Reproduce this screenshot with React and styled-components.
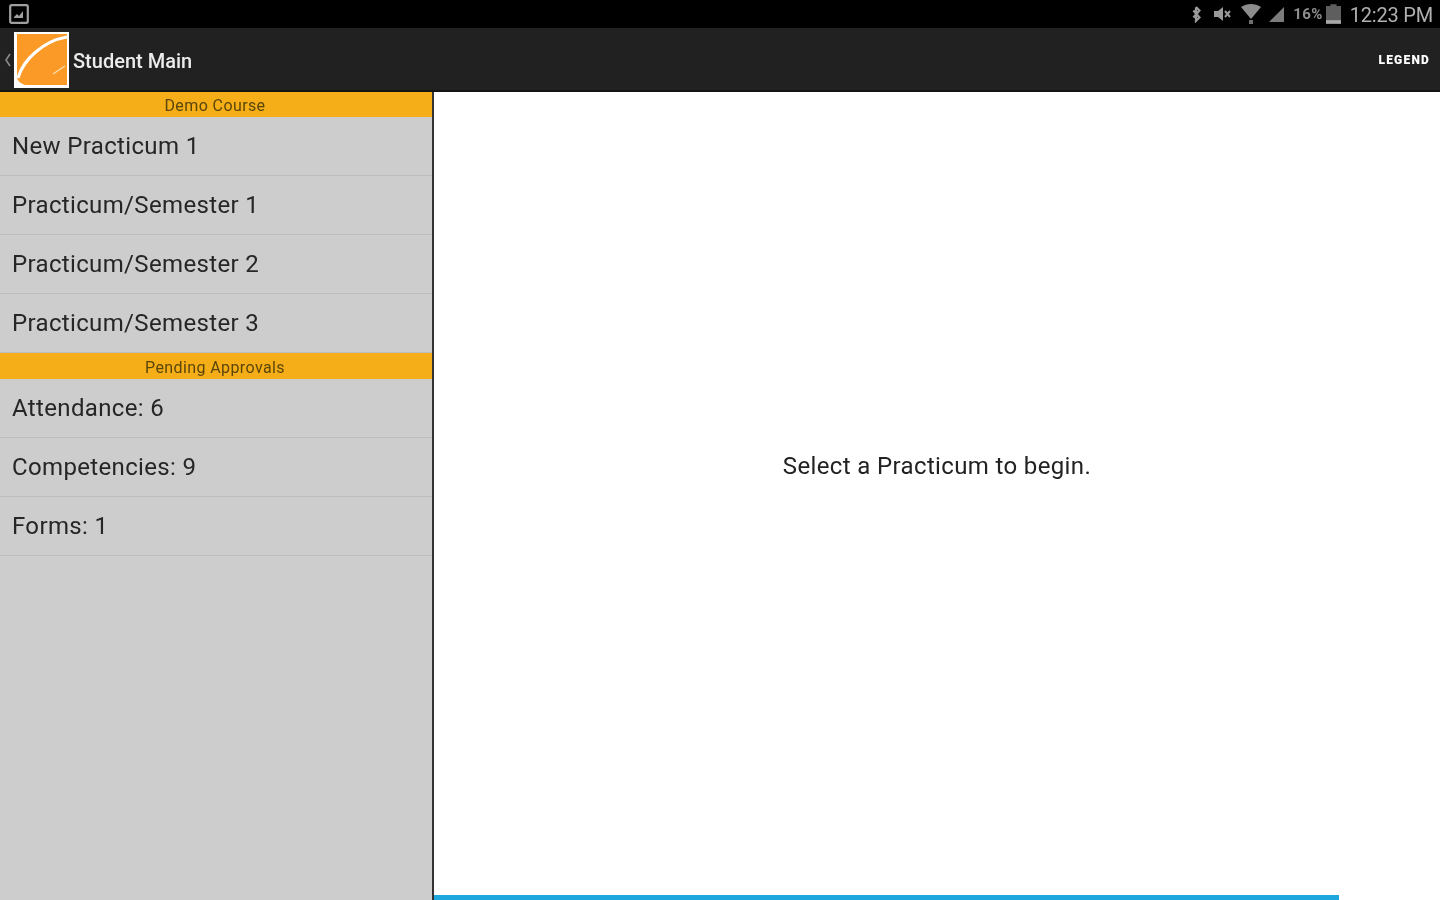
import React from "react";
import styled, { createGlobalStyle } from "styled-components";

const GlobalStyle = createGlobalStyle`
    html, body, #root {
        margin: 0;
        height: 100%;
    }
    body {
        font-family: Roboto, "Liberation Sans", sans-serif;
        overflow: hidden;
    }
`;

// the reference is an upscaled low-res capture, hence the slight softening
const Screen = styled.div`
    width: 1440px;
    height: 900px;
    display: flex;
    flex-direction: column;
    background: #fff;
    overflow: hidden;
    filter: blur(0.6px);
`;

const StatusBar = styled.div`
    height: 28px;
    flex: none;
    background: #000;
    display: flex;
    align-items: center;
    justify-content: space-between;
    padding: 0 7px 0 9px;
    color: #a8a8a8;
`;

const StatusIcons = styled.div`
    display: flex;
    align-items: center;
`;

const StatusSlot = styled.span`
    display: flex;
    align-items: center;
    margin-left: ${(p) => p.$gap || 0}px;
`;

const BatteryText = styled.span`
    font-size: 15px;
    font-weight: 700;
    letter-spacing: 0.4px;
    color: #8f8f8f;
`;

const Clock = styled.span`
    font-size: 20px;
    letter-spacing: -0.2px;
    color: #b0b0b0;
    margin: 2px 0 0 9px;
`;

const Toolbar = styled.div`
    height: 64px;
    flex: none;
    box-sizing: border-box;
    background: #212121;
    border-bottom: 2px solid #141414;
    padding: 2px 10px 0 0;
    display: flex;
    align-items: center;
    justify-content: space-between;
`;

const TitleGroup = styled.div`
    display: flex;
    align-items: center;
    margin-left: 5px;
`;

const Logo = styled.div`
    width: 55px;
    height: 56px;
    margin-left: 3px;
    background: #fff;
    padding: 2px 2px 3px 3px;
    box-sizing: border-box;
    display: flex;
`;

const Title = styled.span`
    color: #ececec;
    font-size: 20px;
    font-weight: 500;
    margin: 2px 0 0 4px;
`;

const LegendButton = styled.span`
    color: #fff;
    font-size: 12px;
    font-weight: 900;
    letter-spacing: 1.2px;
`;

const Body = styled.div`
    flex: 1;
    min-height: 0;
    display: flex;
`;

const Sidebar = styled.div`
    width: 432px;
    flex: none;
    background: #cdcdcd;
    border-right: 2px solid #333;
    display: flex;
    flex-direction: column;
`;

const SectionHeader = styled.div`
    height: ${(p) => p.$height}px;
    flex: none;
    box-sizing: border-box;
    background: #f5ae17;
    color: #5a460a;
    font-size: 16px;
    letter-spacing: 0.4px;
    padding: 2px 2px 0 0;
    display: flex;
    align-items: center;
    justify-content: center;
`;

const Row = styled.div`
    height: 59px;
    flex: none;
    box-sizing: border-box;
    border-bottom: 1px solid #bdbdbd;
    padding-left: 12px;
    display: flex;
    align-items: center;
    color: #262626;
    font-size: 24px;
    letter-spacing: 0.35px;
`;

const Content = styled.div`
    flex: 1;
    min-width: 0;
    display: flex;
    flex-direction: column;
    background: #fff;
`;

const Message = styled.div`
    flex: 1;
    display: flex;
    align-items: center;
    justify-content: center;
    padding-bottom: 56px;
    color: #222;
    font-size: 24px;
    letter-spacing: 0.36px;
`;

const ProgressTrack = styled.div`
    height: 5px;
    flex: none;
`;

const ProgressFill = styled.div`
    height: 100%;
    background: #1ea7dc;
`;

const practicums = [
    "New Practicum 1",
    "Practicum/Semester 1",
    "Practicum/Semester 2",
    "Practicum/Semester 3",
];

const approvals = ["Attendance: 6", "Competencies: 9", "Forms: 1"];

const App = () => (
    <Screen>
        <GlobalStyle />
        <StatusBar>
            <svg width="20" height="20" viewBox="0 0 20 20">
                <rect x="1.2" y="1.2" width="17.6" height="17.6" rx="1.5" fill="none" stroke="#a0a0a0" strokeWidth="2.2" />
                <path d="M5 13l3-3 2 2 4-5v7H5z" fill="#a0a0a0" />
            </svg>
            <StatusIcons>
                <StatusSlot>
                    <svg width="12" height="18" viewBox="0 0 14 18">
                        <path d="M7 1v16l4-4-7-8M7 1l4 4-7 8" fill="none" stroke="#9a9a9a" strokeWidth="2.6" />
                    </svg>
                </StatusSlot>
                <StatusSlot $gap={11}>
                    <svg width="18" height="16" viewBox="0 0 18 16">
                        <path d="M1 5h4l5-4v14l-5-4H1z" fill="#9a9a9a" />
                        <path d="M12 5l5 6M17 5l-5 6" stroke="#9a9a9a" strokeWidth="2" />
                    </svg>
                </StatusSlot>
                <StatusSlot $gap={10}>
                    <svg width="20" height="20" viewBox="0 0 20 20">
                        <path d="M0 3c6-4 14-4 20 0l-10 12z" fill="#8c8c8c" />
                        <path d="M8 16h4v4H8z" fill="#6e6e6e" />
                    </svg>
                </StatusSlot>
                <StatusSlot $gap={8}>
                    <svg width="15" height="15" viewBox="0 0 15 15">
                        <path d="M15 0v15H0z" fill="#7c7c7c" />
                    </svg>
                </StatusSlot>
                <StatusSlot $gap={9}>
                    <BatteryText>16%</BatteryText>
                </StatusSlot>
                <StatusSlot $gap={3}>
                    <svg width="15" height="22" viewBox="0 0 17 22">
                        <path d="M5 0h7v2h5v20H0V2h5z" fill="#5e5e5e" />
                        <rect y="18" width="17" height="4" fill="#a8a8a8" />
                    </svg>
                </StatusSlot>
                <Clock>12:23 PM</Clock>
            </StatusIcons>
        </StatusBar>
        <Toolbar>
            <TitleGroup>
                <svg width="6" height="14" viewBox="0 0 6 14">
                    <path d="M5 1L1 7l4 6" fill="none" stroke="#8a8a8a" strokeWidth="1.6" />
                </svg>
                <Logo>
                    <svg width="50" height="51" viewBox="0 0 50 51">
                        <rect width="50" height="51" fill="#fb9a26" />
                        <path d="M1 44C6 26 26 7 50 3" fill="none" stroke="#fff" strokeWidth="3" />
                        <path d="M0 44c1 3 3 5 8 7H0z" fill="#fff" />
                        <path d="M36 40l12-8" fill="none" stroke="#fcd9a8" strokeWidth="1.5" />
                    </svg>
                </Logo>
                <Title>Student Main</Title>
            </TitleGroup>
            <LegendButton>LEGEND</LegendButton>
        </Toolbar>
        <Body>
            <Sidebar>
                <SectionHeader $height={25}>Demo Course</SectionHeader>
                {practicums.map((name) => (
                    <Row key={name}>{name}</Row>
                ))}
                <SectionHeader $height={26}>Pending Approvals</SectionHeader>
                {approvals.map((name) => (
                    <Row key={name}>{name}</Row>
                ))}
            </Sidebar>
            <Content>
                <Message>Select a Practicum to begin.</Message>
                <ProgressTrack>
                    <ProgressFill style={{ width: `${(905 / 1006) * 100}%` }} />
                </ProgressTrack>
            </Content>
        </Body>
    </Screen>
);

export default App;
